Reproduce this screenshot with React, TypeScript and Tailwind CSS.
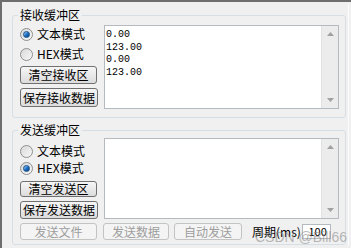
import React from 'react';

const font = { fontFamily: '"Noto Sans CJK SC", "Liberation Sans", sans-serif' };

// Win7 style radio button
const Radio = ({ label, checked }: { label: string; checked?: boolean }) => (
    <div className="flex items-center h-[14px] gap-[4px]">
        <div className="w-[13px] h-[13px] rounded-full border border-[#8e8f8f] bg-gradient-to-br from-[#d8d8d8] to-[#f8f8f8] flex items-center justify-center">
            {checked && (
                <div className="w-[7px] h-[7px] rounded-full bg-gradient-to-br from-[#a5d5ff] via-[#1f73c7] to-[#0b3d7a] border border-[#174f8a]" />
            )}
        </div>
        <span className="text-[12px] leading-[14px] text-black">{label}</span>
    </div>
);

const Btn = ({ label, w, h = 18, disabled }: { label: string; w: string; h?: number; disabled?: boolean }) => (
    <div
        className={`${w} flex items-center justify-center rounded-[3px] border text-[12px] leading-[14px] ${
            disabled
                ? 'border-[#c3c3c3] bg-[#f4f4f4] text-[#9d9d9d]'
                : 'border-[#707070] bg-gradient-to-b from-[#f6f6f6] to-[#dcdcdc] text-black'
        }`}
        style={{ height: h }}
    >
        {label}
    </div>
);

// Text box with a vertical scrollbar on the right
const TextBox = ({ lines, h }: { lines: string[]; h: string }) => (
    <div className={`w-[235px] ${h} flex border border-[#b5b9c0] bg-white`}>
        <div className="flex-1 pl-[1px] pt-[3px] text-[10px] leading-[12.5px] text-black" style={{ fontFamily: '"Liberation Mono", monospace' }}>
            {lines.map((l, i) => (
                <div key={i}>{l}</div>
            ))}
        </div>
        <div className="w-[17px] bg-[#ececec] border-l border-[#e2e2e2] flex flex-col justify-between items-center py-[6px]">
            <svg width="7" height="4" viewBox="0 0 7 4"><path d="M0 4 L3.5 0 L7 4 Z" fill="#a0a0a0" /></svg>
            <svg width="7" height="4" viewBox="0 0 7 4"><path d="M0 0 L3.5 4 L7 0 Z" fill="#a0a0a0" /></svg>
        </div>
    </div>
);

const Legend = ({ text }: { text: string }) => (
    <legend className="ml-[5px] px-[2px] text-[12px] leading-[14px] text-black">{text}</legend>
);

export default function App() {
    return (
        <div className="relative w-[351px] h-[248px] bg-[#f0f0f0] border-t-2 border-l-2 border-[#6e6e6e] pl-[10px] pr-[4px] pt-[6px]" style={font}>
            <div className="absolute right-[2px] top-[2px] bottom-[2px] w-px bg-[#fcfcfc]" />
            <fieldset className="w-[334px] h-[110px] border border-[#d5dfe5] rounded-[3px]">
                <Legend text="接收缓冲区" />
                <div className="flex pl-[7px]">
                    <div className="flex flex-col w-[84px]">
                        <div className="mt-[5px]"><Radio label="文本模式" checked /></div>
                        <div className="mt-[6px]"><Radio label="HEX模式" /></div>
                        <div className="mt-[5px]"><Btn label="清空接收区" w="w-[77px]" /></div>
                        <div className="mt-[4px]"><Btn label="保存接收数据" w="w-[78px]" h={19} /></div>
                    </div>
                    <div className="mt-[3px]">
                        <TextBox lines={['0.00', '123.00', '0.00', '123.00']} h="h-[84px]" />
                    </div>
                </div>
            </fieldset>
            <fieldset className="mt-[5px] w-[334px] h-[122px] border border-[#d5dfe5] rounded-[3px]">
                <Legend text="发送缓冲区" />
                <div className="flex pl-[7px]">
                    <div className="flex flex-col w-[84px]">
                        <div className="mt-[7px]"><Radio label="文本模式" /></div>
                        <div className="mt-[3px]"><Radio label="HEX模式" checked /></div>
                        <div className="mt-[6px]"><Btn label="清空发送区" w="w-[77px]" h={16} /></div>
                        <div className="mt-[4px]"><Btn label="保存发送数据" w="w-[78px]" h={18} /></div>
                    </div>
                    <div className="mt-[1px]">
                        <TextBox lines={[]} h="h-[81px]" />
                    </div>
                </div>
                <div className="flex items-center pl-[7px] mt-[4px]">
                    <Btn label="发送文件" w="w-[77px]" h={17} disabled />
                    <div className="ml-[6px]"><Btn label="发送数据" w="w-[66px]" h={17} disabled /></div>
                    <div className="ml-[5px]"><Btn label="自动发送" w="w-[68px]" h={17} disabled /></div>
                    <span className="ml-[10px] text-[12px] leading-[14px] text-black">周期(ms)</span>
                    <div className="ml-[1px] w-[29px] h-[15px] bg-white border border-[#b5b9c0] text-[11px] leading-[13px] text-right pr-[3px]">100</div>
                </div>
            </fieldset>
            <span className="absolute right-[4px] bottom-[3px] text-[14px] leading-[16px] text-[#8c8c8c]/60" style={{ fontFamily: '"Liberation Sans", sans-serif' }}>
                CSDN @Bill66
            </span>
        </div>
    );
}
